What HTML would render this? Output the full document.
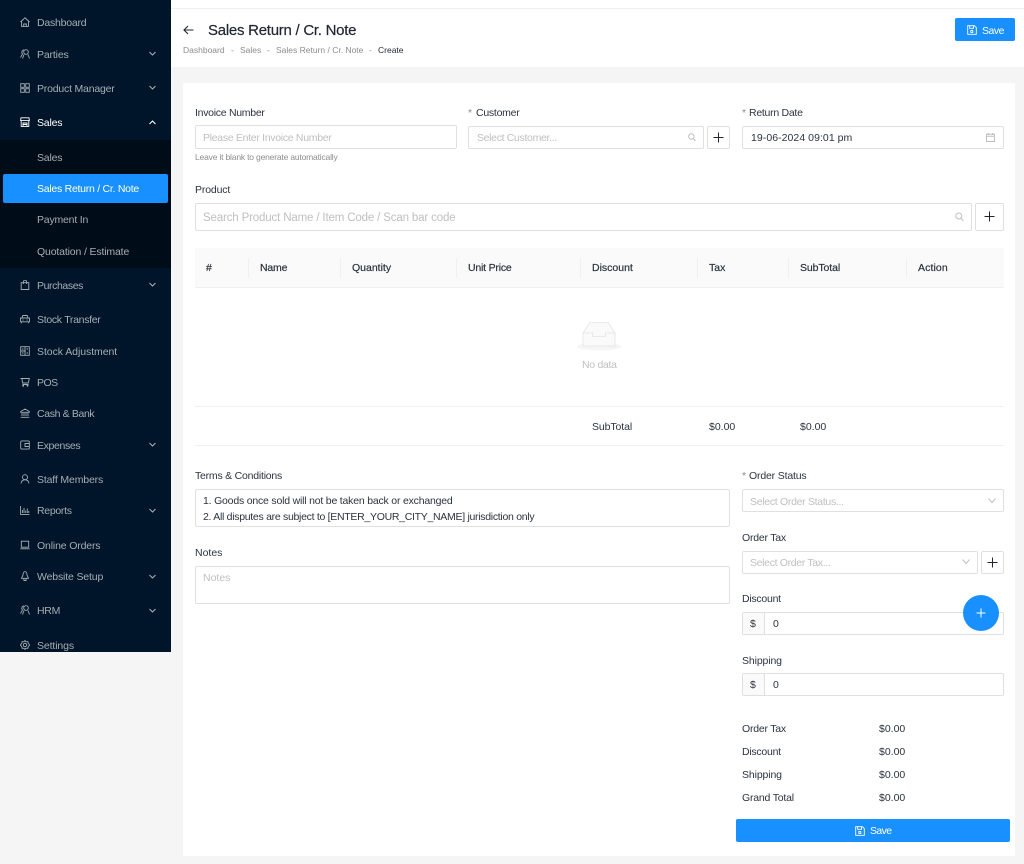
<!DOCTYPE html>
<html lang="en"><head><meta charset="utf-8"><title>Sales Return / Cr. Note</title>
<style>
*{box-sizing:border-box}
html,body{margin:0;padding:0}
body{width:1024px;height:864px;position:relative;overflow:hidden;background:#f5f5f5;font-family:"Liberation Sans",sans-serif;font-size:10.5px;color:#2b3440}
.a{position:absolute}
.t{position:absolute;white-space:nowrap;line-height:14px;height:14px;margin-top:1px}
.s{font-size:8.5px;margin-top:0}
#side{position:absolute;left:0;top:0;width:171px;height:652px;background:#001529}
#sub{position:absolute;left:0;top:140px;width:171px;height:128px;background:#000c17}
#act{position:absolute;left:3px;top:174px;width:165px;height:29px;background:#1890ff;border-radius:2px}
.m{color:#a6adb4;left:37px}
.w{color:#fff}
.i{position:absolute;left:20px;width:10px;height:10px;fill:none;stroke:#a6adb4;stroke-width:.9}
.c{position:absolute;left:149px;width:7px;height:5px;fill:none;stroke:#a6adb4;stroke-width:1.1}
.box{position:absolute;background:#fff;border:1px solid #e0e0e0;border-radius:2px}
.ph{color:#bfbfbf}
.lb{color:#2b3440}
.st{color:#8c8c8c}
.th{color:#2b3440;-webkit-text-stroke:.2px #2b3440}
.sep{position:absolute;top:258px;width:1px;height:20px;background:#f0f0f0}
.ic{position:absolute;fill:none}
.btn{position:absolute;background:#1890ff;border-radius:2px}
</style></head><body>

<div id="side"></div><div id="sub"></div><div id="act"></div>

<svg class="i" style="top:17px" viewBox="0 0 10 10"><path d="M.5 5 5 .8 9.5 5M1.6 4v5.400h6.800V4M3.700 9.400V7h2.600v2.400"/></svg>
<span class="t m" style="top:15px;letter-spacing:-.22px">Dashboard</span>
<svg class="i" style="top:49px" viewBox="0 0 10 10"><circle cx="6" cy="3" r="2.300"/><path d="M2.500 9.500 4 5.500M9.500 9.500 8 5.500M4 .8A2.500 2.500 0 0 0 2.500 5L.5 8.500"/></svg>
<span class="t m" style="top:47px;letter-spacing:-.15px">Parties</span>
<svg class="c" style="top:51px" viewBox="0 0 7 5"><path d="M.5 1 3.500 4 6.500 1"/></svg>
<svg class="i" style="top:83px" viewBox="0 0 10 10"><rect x=".7" y=".7" width="3.600" height="3.600"/><rect x="5.700" y=".7" width="3.600" height="3.600"/><rect x=".7" y="5.700" width="3.600" height="3.600"/><rect x="5.700" y="5.700" width="3.600" height="3.600"/></svg>
<span class="t m" style="top:81px;letter-spacing:-.2px">Product Manager</span>
<svg class="c" style="top:85px" viewBox="0 0 7 5"><path d="M.5 1 3.500 4 6.500 1"/></svg>
<svg class="i" style="top:117px;stroke:#fff" viewBox="0 0 10 10"><path d="M1 .8h8l.4 2.800H.6zM1.200 3.600v5.800h7.600V3.600M3 9.400V6h4v3.400M3 7.500h4"/></svg>
<span class="t w" style="left:37px;top:115px;letter-spacing:-.2px">Sales</span>
<svg class="c" style="top:120px;stroke:#fff" viewBox="0 0 7 5"><path d="M.5 4 3.500 1 6.500 4"/></svg>
<span class="t m" style="top:150px;letter-spacing:-.2px">Sales</span>
<span class="t w" style="left:37px;top:181px;letter-spacing:-.26px">Sales Return / Cr. Note</span>
<span class="t m" style="top:212px;letter-spacing:-.2px">Payment In</span>
<span class="t m" style="top:244px;letter-spacing:-.15px">Quotation / Estimate</span>
<svg class="i" style="top:280px" viewBox="0 0 10 10"><path d="M1.200 2.700h7.600v6.800H1.200zM3.300 4V1.900A1.700 1.700 0 0 1 6.700 1.900V4"/></svg>
<span class="t m" style="top:278px;letter-spacing:-.4px">Purchases</span>
<svg class="c" style="top:282px" viewBox="0 0 7 5"><path d="M.5 1 3.500 4 6.500 1"/></svg>
<svg class="i" style="top:314px" viewBox="0 0 10 10"><path d="M2 4 2.800 1.500h4.400L8 4M.5 4h9v3.800h-9zM1.500 7.800v1.400M8.500 7.800v1.400M2.500 6h1M6.500 6h1"/></svg>
<span class="t m" style="top:312px;letter-spacing:-.3px">Stock Transfer</span>
<svg class="i" style="top:346px" viewBox="0 0 10 10"><rect x=".7" y=".7" width="8.600" height="8.600"/><path d="M.7 5h5M5 .7v8.600M6.500 3h1.500M6.500 7h1.500M2 3h1.500M2 7h1.500"/></svg>
<span class="t m" style="top:344px;letter-spacing:-.06px">Stock Adjustment</span>
<svg class="i" style="top:377px" viewBox="0 0 10 10"><path d="M.5 1.500h8.800L8.300 6H2.500L2 1.500M2.500 7.500h6"/><circle cx="3.200" cy="8.700" r=".5"/><circle cx="7.500" cy="8.700" r=".5"/></svg>
<span class="t m" style="top:375px;letter-spacing:-.5px">POS</span>
<svg class="i" style="top:408px" viewBox="0 0 10 10"><path d="M.7 3.500 5 1l4.300 2.500v.8H.7zM2 5v3M4 5v3M6 5v3M8 5v3M.7 9.300h8.600"/></svg>
<span class="t m" style="top:406px;letter-spacing:-.36px">Cash &amp; Bank</span>
<svg class="i" style="top:440px" viewBox="0 0 10 10"><rect x=".7" y=".9" width="8.600" height="8.200" rx="1"/><path d="M9.300 3.500H5v3h4.300"/></svg>
<span class="t m" style="top:438px;letter-spacing:-.35px">Expenses</span>
<svg class="c" style="top:442px" viewBox="0 0 7 5"><path d="M.5 1 3.500 4 6.500 1"/></svg>
<svg class="i" style="top:474px" viewBox="0 0 10 10"><circle cx="5" cy="3.200" r="2.500"/><path d="M1 9.500C1.300 7 3 5.800 5 5.800S8.700 7 9 9.500"/></svg>
<span class="t m" style="top:472px;letter-spacing:-.15px">Staff Members</span>
<svg class="i" style="top:505px" viewBox="0 0 10 10"><path d="M.6 1v8.400h8.800M2.400 8V5M4 8V3M5.700 8V5.500M7.300 8V3.500M8.800 8V6"/></svg>
<span class="t m" style="top:503px;letter-spacing:-.3px">Reports</span>
<svg class="c" style="top:508px" viewBox="0 0 7 5"><path d="M.5 1 3.500 4 6.500 1"/></svg>
<svg class="i" style="top:540px" viewBox="0 0 10 10"><rect x="1.300" y="1.200" width="7.400" height="6"/><path d="M.3 8.800h9.400"/></svg>
<span class="t m" style="top:538px;letter-spacing:-.15px">Online Orders</span>
<svg class="i" style="top:571px" viewBox="0 0 10 10"><path d="M5 .5C3.400 1 3 2.300 3 4L1.500 7.300h7L7 4C7 2.300 6.600 1 5 .5ZM3.800 7.500 4 9.500h2l.2-2"/></svg>
<span class="t m" style="top:569px;letter-spacing:-.15px">Website Setup</span>
<svg class="c" style="top:574px" viewBox="0 0 7 5"><path d="M.5 1 3.500 4 6.500 1"/></svg>
<svg class="i" style="top:605px" viewBox="0 0 10 10"><circle cx="6" cy="3" r="2.300"/><path d="M2.500 9.500 4 5.500M9.500 9.500 8 5.500M4 .8A2.500 2.500 0 0 0 2.500 5L.5 8.500"/></svg>
<span class="t m" style="top:603px;letter-spacing:-.3px">HRM</span>
<svg class="c" style="top:608px" viewBox="0 0 7 5"><path d="M.5 1 3.500 4 6.500 1"/></svg>
<svg class="i" style="top:640px" viewBox="0 0 10 10"><circle cx="5" cy="5" r="1.700"/><path d="M5 .5 6 1.800 7.800 1.600 8.200 3.300 9.600 5 8.200 6.700 7.800 8.400 6 8.200 5 9.500 4 8.200 2.200 8.400 1.800 6.700.4 5 1.800 3.300 2.200 1.600 4 1.800Z"/></svg>
<span class="t m" style="top:638px;letter-spacing:-.12px">Settings</span>

<!-- header -->
<div class="a" style="left:171px;top:0;width:853px;height:67px;background:#fff"></div>
<div class="a" style="left:171px;top:8px;width:853px;height:1px;background:#f0f0f0"></div>
<svg class="ic" style="left:183px;top:25px;width:11px;height:10px;stroke:#1f2733;stroke-width:1.1" viewBox="0 0 11 10"><path d="M10.500 5H1M5 1 1 5l4 4"/></svg>
<span class="t" style="left:208px;top:21px;height:18px;line-height:18px;font-size:15px;color:#1f2733;letter-spacing:-.26px;-webkit-text-stroke:.2px #1f2733">Sales Return / Cr. Note</span>
<span class="t st s" style="left:183px;top:43px">Dashboard</span>
<span class="t st s" style="left:231px;top:43px">-</span>
<span class="t st s" style="left:240px;top:43px">Sales</span>
<span class="t st s" style="left:267px;top:43px">-</span>
<span class="t st s" style="left:276px;top:43px">Sales Return / Cr. Note</span>
<span class="t st s" style="left:369px;top:43px">-</span>
<span class="t s" style="left:378px;top:43px;color:#1f2733">Create</span>

<div class="btn" style="left:955px;top:18px;width:60px;height:23px"></div>
<svg class="ic" style="left:967px;top:25px;width:10px;height:10px;stroke:#fff;stroke-width:.9" viewBox="0 0 10 10"><path d="M.7.7h6.700l1.900 1.900v6.700H.7zM2.700.7v2.600h3.800V.7"/><rect x="3.800" y="5.500" width="2" height="2"/></svg>
<span class="t w" style="left:982px;top:23px;letter-spacing:-.5px">Save</span>

<!-- card -->
<div class="a" style="left:183px;top:83px;width:832px;height:773px;background:#fff"></div>

<span class="t lb" style="left:195px;top:105px;letter-spacing:-.28px">Invoice Number</span>
<div class="box" style="left:195px;top:125px;width:262px;height:24px"></div>
<span class="t ph" style="left:203px;top:130px;letter-spacing:-.3px">Please Enter Invoice Number</span>
<span class="t st s" style="left:195px;top:150px;letter-spacing:-.18px">Leave it blank to generate automatically</span>

<span class="t st" style="left:468px;top:105px">*</span>
<span class="t lb" style="left:476px;top:105px;letter-spacing:-.25px">Customer</span>
<div class="box" style="left:468px;top:126px;width:236px;height:23px"></div>
<span class="t ph" style="left:477px;top:130px;letter-spacing:-.33px">Select Customer...</span>
<svg class="ic" style="left:688px;top:133px;width:8px;height:9px;stroke:#bfbfbf" viewBox="0 0 8 9"><circle cx="3.300" cy="3.500" r="2.700"/><path d="M5.300 5.500 7.500 8"/></svg>
<div class="box" style="left:707px;top:126px;width:23px;height:23px"></div>
<svg class="ic" style="left:713px;top:132px;width:11px;height:11px;stroke:#1f2733" viewBox="0 0 11 11"><path d="M5.500.5v10M.5 5.500h10"/></svg>

<span class="t st" style="left:742px;top:105px">*</span>
<span class="t lb" style="left:749px;top:105px;letter-spacing:-.27px">Return Date</span>
<div class="box" style="left:742px;top:126px;width:262px;height:23px"></div>
<span class="t lb" style="left:751px;top:130px;letter-spacing:.05px">19-06-2024 09:01 pm</span>
<svg class="ic" style="left:986px;top:133px;width:9px;height:9px;stroke:#bfbfbf" viewBox="0 0 9 9"><rect x=".5" y="1.200" width="8" height="7.300"/><path d="M.5 3.300h8M2.500 0v2M6.500 0v2"/></svg>

<span class="t lb" style="left:195px;top:182px;letter-spacing:-.15px">Product</span>
<div class="box" style="left:195px;top:203px;width:777px;height:28px"></div>
<span class="t ph" style="left:203px;top:210px;font-size:11.5px;letter-spacing:-.15px">Search Product Name / Item Code / Scan bar code</span>
<svg class="ic" style="left:955px;top:212px;width:9px;height:10px;stroke:#bfbfbf" viewBox="0 0 9 10"><circle cx="3.800" cy="4" r="3"/><path d="M6 6.200 8.500 9"/></svg>
<div class="box" style="left:975px;top:203px;width:29px;height:28px"></div>
<svg class="ic" style="left:984px;top:211px;width:11px;height:11px;stroke:#1f2733" viewBox="0 0 11 11"><path d="M5.500.5v10M.5 5.500h10"/></svg>

<div class="a" style="left:195px;top:248px;width:809px;height:40px;background:#fafafa;border-bottom:1px solid #f0f0f0"></div>
<div class="sep" style="left:248px"></div><div class="sep" style="left:340px"></div><div class="sep" style="left:456px"></div><div class="sep" style="left:580px"></div><div class="sep" style="left:697px"></div><div class="sep" style="left:788px"></div><div class="sep" style="left:906px"></div>
<span class="t th" style="left:206px;top:260px">#</span>
<span class="t th" style="left:260px;top:260px;letter-spacing:-.2px">Name</span>
<span class="t th" style="left:352px;top:260px">Quantity</span>
<span class="t th" style="left:468px;top:260px;letter-spacing:-.2px">Unit Price</span>
<span class="t th" style="left:592px;top:260px">Discount</span>
<span class="t th" style="left:709px;top:260px">Tax</span>
<span class="t th" style="left:800px;top:260px;letter-spacing:-.1px">SubTotal</span>
<span class="t th" style="left:918px;top:260px;letter-spacing:.1px">Action</span>

<svg class="ic" style="left:576px;top:320px;width:48px;height:32px" viewBox="0 0 48 32"><ellipse cx="23" cy="26.500" rx="22" ry="4" fill="#f5f5f5"/><path d="M7 13 14 2.500h18L39 13v13H7z" fill="#fafafa" stroke="#e3e3e3" stroke-width=".8"/><path d="M7 13h9.500v3.500h13V13H39" fill="#fafafa" stroke="#e3e3e3" stroke-width=".8"/></svg>
<span class="t ph" style="left:582px;top:357px;letter-spacing:-.3px">No data</span>

<div class="a" style="left:195px;top:406px;width:809px;height:1px;background:#f0f0f0"></div>
<span class="t lb" style="left:592px;top:419px;letter-spacing:-.1px">SubTotal</span>
<span class="t lb" style="left:709px;top:419px">$0.00</span>
<span class="t lb" style="left:800px;top:419px">$0.00</span>
<div class="a" style="left:195px;top:445px;width:809px;height:1px;background:#f0f0f0"></div>

<span class="t lb" style="left:195px;top:468px;letter-spacing:-.22px">Terms &amp; Conditions</span>
<div class="box" style="left:195px;top:489px;width:535px;height:38px"></div>
<span class="t lb" style="left:203px;top:493px;letter-spacing:-.2px">1. Goods once sold will not be taken back or exchanged</span>
<span class="t lb" style="left:203px;top:509px;letter-spacing:-.29px">2. All disputes are subject to [ENTER_YOUR_CITY_NAME] jurisdiction only</span>
<span class="t lb" style="left:195px;top:545px">Notes</span>
<div class="box" style="left:195px;top:566px;width:535px;height:38px"></div>
<span class="t ph" style="left:203px;top:570px">Notes</span>

<span class="t st" style="left:742px;top:468px">*</span>
<span class="t lb" style="left:749px;top:468px;letter-spacing:-.17px">Order Status</span>
<div class="box" style="left:742px;top:489px;width:262px;height:23px"></div>
<span class="t ph" style="left:750px;top:494px;letter-spacing:-.3px">Select Order Status...</span>
<svg class="ic" style="left:988px;top:498px;width:8px;height:5px;stroke:#bfbfbf" viewBox="0 0 8 5"><path d="M.5.500 4 4.500 7.500.5"/></svg>

<span class="t lb" style="left:742px;top:530px;letter-spacing:-.22px">Order Tax</span>
<div class="box" style="left:742px;top:551px;width:236px;height:23px"></div>
<span class="t ph" style="left:750px;top:555px;letter-spacing:-.33px">Select Order Tax...</span>
<svg class="ic" style="left:962px;top:559px;width:8px;height:5px;stroke:#bfbfbf" viewBox="0 0 8 5"><path d="M.5.500 4 4.500 7.500.5"/></svg>
<div class="box" style="left:981px;top:551px;width:23px;height:23px"></div>
<svg class="ic" style="left:987px;top:557px;width:11px;height:11px;stroke:#1f2733" viewBox="0 0 11 11"><path d="M5.500.5v10M.5 5.500h10"/></svg>

<span class="t lb" style="left:742px;top:591px;letter-spacing:-.25px">Discount</span>
<div class="box" style="left:742px;top:612px;width:262px;height:23px"></div>
<div class="a" style="left:743px;top:613px;width:22px;height:21px;background:#fafafa;border-right:1px solid #e0e0e0"></div>
<span class="t lb" style="left:750px;top:616px">$</span>
<span class="t lb" style="left:773px;top:616px">0</span>

<span class="t lb" style="left:742px;top:653px;letter-spacing:-.12px">Shipping</span>
<div class="box" style="left:742px;top:673px;width:262px;height:23px"></div>
<div class="a" style="left:743px;top:674px;width:22px;height:21px;background:#fafafa;border-right:1px solid #e0e0e0"></div>
<span class="t lb" style="left:750px;top:677px">$</span>
<span class="t lb" style="left:773px;top:677px">0</span>

<span class="t lb" style="left:742px;top:721px;letter-spacing:-.22px">Order Tax</span><span class="t lb" style="left:879px;top:721px">$0.00</span>
<span class="t lb" style="left:742px;top:744px;letter-spacing:-.25px">Discount</span><span class="t lb" style="left:879px;top:744px">$0.00</span>
<span class="t lb" style="left:742px;top:767px;letter-spacing:-.12px">Shipping</span><span class="t lb" style="left:879px;top:767px">$0.00</span>
<span class="t lb" style="left:742px;top:790px;letter-spacing:-.2px">Grand Total</span><span class="t lb" style="left:879px;top:790px">$0.00</span>

<div class="btn" style="left:736px;top:819px;width:274px;height:23px"></div>
<svg class="ic" style="left:855px;top:826px;width:10px;height:10px;stroke:#fff;stroke-width:.9" viewBox="0 0 10 10"><path d="M.7.7h6.700l1.900 1.900v6.700H.7zM2.700.7v2.600h3.800V.7"/><rect x="3.800" y="5.500" width="2" height="2"/></svg>
<span class="t w" style="left:870px;top:823px;letter-spacing:-.6px">Save</span>

<div class="a" style="left:963px;top:595px;width:36px;height:36px;border-radius:50%;background:#1890ff"></div>
<svg class="ic" style="left:976px;top:608px;width:10px;height:10px;stroke:#fff" viewBox="0 0 10 10"><path d="M5 .5v9M.5 5h9"/></svg>

</body></html>
